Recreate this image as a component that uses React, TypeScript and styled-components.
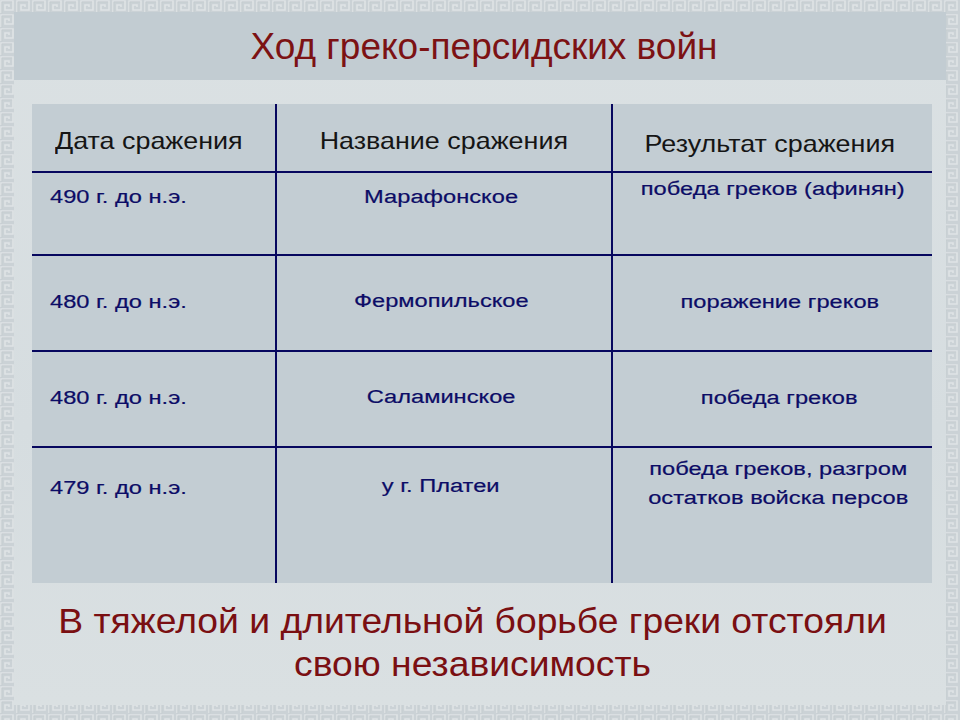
import styled, { createGlobalStyle } from "styled-components";

const meander = encodeURIComponent(
  `<svg xmlns="http://www.w3.org/2000/svg" width="16" height="14" viewBox="0 0 16 14"><rect width="16" height="14" fill="#cbd2d6"/><path d="M1 13 V1 H13 V10 H5 V5 H9 V7" fill="none" stroke="#dfe4e6" stroke-width="1.6"/><path d="M1.8 13.6 V1.8 H12.2" fill="none" stroke="#bec6cb" stroke-width="0.6"/></svg>`
);

const GlobalStyle = createGlobalStyle`
  html, body {
    margin: 0;
    padding: 0;
    background: #cbd2d6;
  }
  * {
    box-sizing: border-box;
  }
`;

// pads: top offset for date / name / result; inset: left padding of the result cell
const rows = [
  {
    date: "490 г. до н.э.",
    name: "Марафонское",
    result: ["победа греков (афинян)"],
    pads: [9, 9, 1],
    inset: 0,
  },
  {
    date: "480 г. до н.э.",
    name: "Фермопильское",
    result: ["поражение греков"],
    pads: [31, 30, 31],
    inset: 14,
  },
  {
    date: "480 г. до н.э.",
    name: "Саламинское",
    result: ["победа греков"],
    pads: [31, 30, 31],
    inset: 14,
  },
  {
    date: "479 г. до н.э.",
    name: "у г. Платеи",
    result: ["победа греков, разгром", "остатков войска персов"],
    pads: [25, 23, 6],
    inset: 12,
  },
];

function App() {
  return (
    <>
      <GlobalStyle />
      <Frame>
        <Slide>
          <TitleBar>
            <Title>Ход греко-персидских войн</Title>
          </TitleBar>
          <Table>
            <HeadCell $col={0}>
              <Wide $sx={1.12} $origin="left">Дата сражения</Wide>
            </HeadCell>
            <HeadCell $col={1}>
              <Wide $sx={1.12} $origin="center">Название сражения</Wide>
            </HeadCell>
            <HeadCell $col={2}>
              <Wide $sx={1.12} $origin="center">Результат сражения</Wide>
            </HeadCell>
            {rows.map((r, i) => {
              const last = i === rows.length - 1;
              return [
                <Cell key={`d${i}`} $col={0} $last={last} $pad={r.pads[0]} $inset={18}>
                  <Wide $sx={1.26} $origin="left">{r.date}</Wide>
                </Cell>,
                <Cell key={`n${i}`} $col={1} $last={last} $pad={r.pads[1]} $inset={0}>
                  <Wide $sx={1.26} $origin="center">{r.name}</Wide>
                </Cell>,
                <Cell key={`r${i}`} $col={2} $last={last} $pad={r.pads[2]} $inset={r.inset}>
                  <Wide $sx={1.26} $origin="center">
                    {r.result.map((text) => (
                      <div key={text}>{text}</div>
                    ))}
                  </Wide>
                </Cell>,
              ];
            })}
          </Table>
          <Conclusion>
            <Wide $sx={1.05} $origin="center">
              В тяжелой и длительной борьбе греки отстояли
              <br />
              свою независимость
            </Wide>
          </Conclusion>
        </Slide>
      </Frame>
    </>
  );
}

const Frame = styled.div`
  width: 960px;
  height: 720px;
  padding: 12px 14px 15px 14px;
  background-color: #cbd2d6;
  background-image: url("data:image/svg+xml,${meander}");
  background-size: 16px 14px;
`;

const Slide = styled.div`
  width: 100%;
  height: 100%;
  display: flex;
  flex-direction: column;
  background: linear-gradient(180deg, #dbe1e3 0%, #d6dde0 60%, #dae0e2 100%);
  font-family: "Liberation Sans", Arial, sans-serif;
`;

const TitleBar = styled.div`
  height: 68px;
  display: flex;
  align-items: center;
  justify-content: center;
  padding: 2px 0 0 8px;
  background: #c2ccd2;
`;

const Title = styled.h1`
  margin: 0;
  font-weight: normal;
  font-size: 37px;
  color: #7c1214;
`;

const Table = styled.div`
  margin: 24px 0 0 18px;
  width: 900px;
  display: grid;
  grid-template-columns: 245px 336px 319px;
  grid-template-rows: 69px 83px 96px 96px 135px;
  background: #c3cdd3;
`;

const Wide = styled.span<{ $sx: number; $origin: string }>`
  display: inline-block;
  transform: scaleX(${(p) => p.$sx});
  transform-origin: ${(p) => p.$origin};
  white-space: nowrap;
`;

const line = "2px solid #07075e";

const HeadCell = styled.div<{ $col: number }>`
  display: flex;
  align-items: center;
  justify-content: ${(p) => (p.$col === 0 ? "flex-start" : "center")};
  padding-top: ${(p) => (p.$col === 2 ? "12px" : "6px")};
  padding-left: ${(p) => (p.$col === 0 ? "23px" : "0")};
  padding-right: ${(p) => (p.$col === 2 ? "6px" : "0")};
  border-right: ${(p) => (p.$col < 2 ? line : "none")};
  border-bottom: ${line};
  font-size: 24px;
  color: #151515;
`;

const Cell = styled.div<{ $col: number; $last: boolean; $pad: number; $inset: number }>`
  padding-top: ${(p) => p.$pad}px;
  padding-left: ${(p) => p.$inset}px;
  padding-right: ${(p) => (p.$col === 1 ? "6px" : "0")};
  text-align: ${(p) => (p.$col === 0 ? "left" : "center")};
  border-right: ${(p) => (p.$col < 2 ? line : "none")};
  border-bottom: ${(p) => (p.$last ? "none" : line)};
  font-size: 18.8px;
  line-height: 29px;
  color: #0c0c66;
  -webkit-text-stroke: 0.2px #0c0c66;
`;

const Conclusion = styled.p`
  margin: 17px 16px 0 0;
  text-align: center;
  font-size: 35.5px;
  line-height: 43px;
  color: #7a0f12;
`;

export default App;
